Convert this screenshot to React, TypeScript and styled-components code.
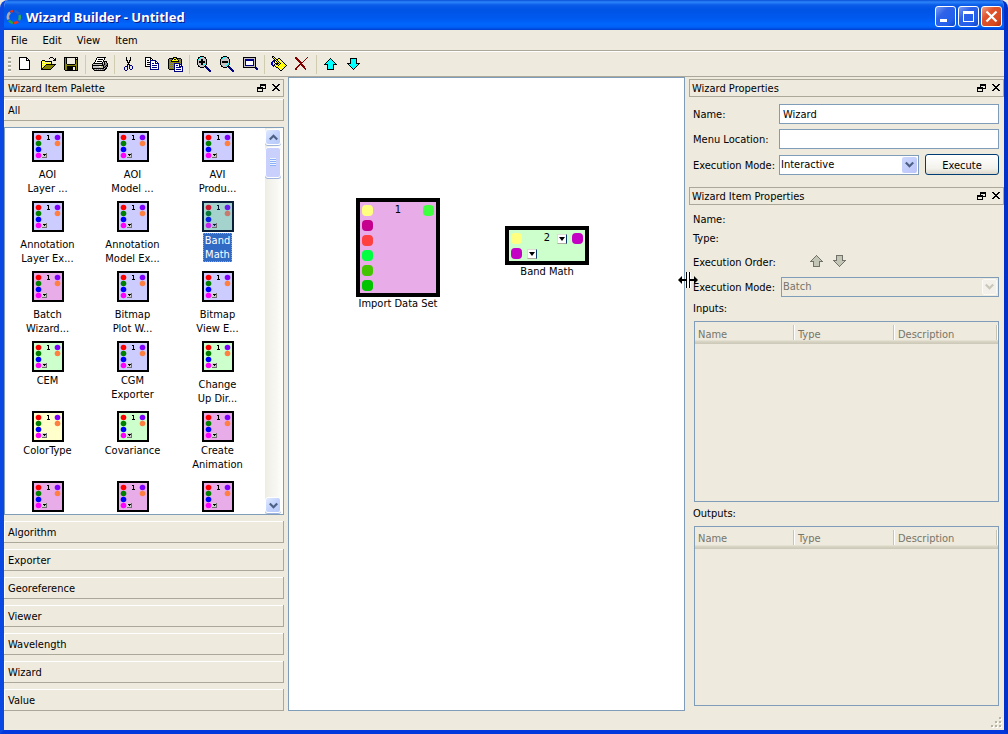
import React from 'react';
import styled, { createGlobalStyle } from 'styled-components';

const FACE = '#eeeade';
const SHADOW = '#aca899';
const FIELD_BORDER = '#7f9db9';

const GlobalStyle = createGlobalStyle`
  * { box-sizing: border-box; }
  body { margin: 0; background: ${FACE}; }
  body, button, input, select {
    font-family: 'DejaVu Sans Condensed', Tahoma, sans-serif;
    font-size: 11px;
    line-height: 14px;
    color: #000;
  }
  button { padding: 0; border: 0; background: none; text-align: left; }
`;

/* ---------- pixel icons ---------- */

const PALETTE: Record<string, string> = {
  K: '#000000',
  W: '#ffffff',
  N: '#000084',
  Y: '#ffff00',
  P: '#ffff9c',
  O: '#848200',
  G: '#848284',
  L: '#c6c3c6',
  E: '#eeeade',
  C: '#00ffff',
  R: '#840000',
  B: '#0000ff',
};

const ICONS: Record<string, string[]> = {
  new: [
    '',
    '...KKKKKKKK',
    '...KWWWWWWKK',
    '...KWWWWWWKWK',
    '...KWWWWWWKKKK',
    '...KWWWWWWWWWK',
    '...KWWWWWWWWWK',
    '...KWWWWWWWWWK',
    '...KWWWWWWWWWK',
    '...KWWWWWWWWWK',
    '...KWWWWWWWWWK',
    '...KWWWWWWWWWK',
    '...KWWWWWWWWWK',
    '...KKKKKKKKKKK',
  ],
  open: [
    '',
    '...........KKK',
    '..........K...K.K',
    '...............KK',
    '...KKK........KKK',
    '..KYPYKKKKKKK',
    '..KPYPYPYPYPK',
    '..KYPYPYPYPYK',
    '..KPYPYKKKKKKKKKK',
    '..KYPYKOOOOOOOOK',
    '..KPYKOOOOOOOOK',
    '..KYKOOOOOOOOK',
    '..KKOOOOOOOOK',
    '..KKKKKKKKKK',
  ],
  save: [
    '',
    '..KKKKKKKKKKKKKK',
    '..KOKEEEEEEEEKEK',
    '..KOKEEEEEEEEKKK',
    '..KOKEEEEEEEEKOK',
    '..KOKEEEEEEEEKOK',
    '..KOKEEEEEEEEKOK',
    '..KOKEEEEEEEEKOK',
    '..KOOKKKKKKKKOOK',
    '..KOOOOOOOOOOOOK',
    '..KOOKKKKKKKKKOK',
    '..KOOKKKKKKEEKOK',
    '..KOOKKKKKKEEKOK',
    '..KOOKKKKKKEEKOK',
    '...KKKKKKKKKKKKK',
  ],
  print: [
    '',
    '......KKKKKKKKK',
    '.....KWWWWWWWK',
    '.....KWKKKKKWK',
    '....KWWWWWWWK',
    '....KWKKKKKWKKKK',
    '...KWWWWWWWKLKLK',
    '..KKKKKKKKKKLKGGK',
    '.KLLLLLLLLLKGKGGK',
    '.KKKKKKKKKKKKGGKK',
    '.KLLLLLLPPLLKGKGK',
    '.KLLLLLLLLLLKKGK',
    '.KKKKKKKKKKKKLKK',
    '..KGLGLGLGLGGKK',
    '...KKKKKKKKKKK',
  ],
  cut: [
    '',
    '......K...K',
    '......K...K',
    '......K...K',
    '......KK.KK',
    '.......K.K',
    '.......KKK',
    '........K',
    '.......NKN',
    '.......N.NNN',
    '.....NNN.N..N',
    '....N..N.N..N',
    '....N..N.N..N',
    '....N..N..NN',
    '.....NN',
  ],
  copy: [
    '',
    '..KKKKKK',
    '..KWWWWKK',
    '..KWWWWKWK',
    '..KWKKWNNNNNN',
    '..KWWWWNWWWWNN',
    '..KWKKKNWWWWNWN',
    '..KWWWWNWNNWNNNN',
    '..KWKKKNWWWWWWWN',
    '..KWWWWNWNNNNNWN',
    '..KKKKKNWWWWWWWN',
    '.......NWNNNNNWN',
    '.......NWWWWWWWN',
    '.......NNNNNNNNN',
  ],
  paste: [
    '',
    '.......KKKK',
    '...KKKKKYYKKKKK',
    '..KOGOKYKKYKGOGK',
    '..KGOKYYYYYYKGOK',
    '..KOGKKKKKKKKOGK',
    '..KGOGOGOGOGOGOK',
    '..KOGOGONNNNNNGK',
    '..KGOGOGNWWWWNNK',
    '..KOGOGONWNNWNWN',
    '..KGOGOGNWWWWNNNN',
    '..KOGOGONWNNNNNWN',
    '..KGOGOGNWWWWWWWN',
    '...KKKKKNWNNNNNWN',
    '........NWWWWWWWN',
    '........NNNNNNNNN',
  ],
  zoomIn: [
    '.....KKKK',
    '...KKCLLLKK',
    '...KCLLLLLK',
    '..KCLLKKLLLK',
    '..KLLLKKLLLK',
    '..KLKKKKKKLK',
    '..KLKKKKKKLK',
    '..KLLLKKLLCK',
    '..KLLLKKLCLK',
    '...KLLLLCLK',
    '...KKLLLLKKN',
    '.....KKKK.NNN',
    '...........NNN',
    '............NNN',
    '.............NNN',
    '..............NN',
  ],
  zoomOut: [
    '.....KKKK',
    '...KKCCLLKK',
    '...KCLLLLLK',
    '..KCLLLLLLLK',
    '..KLLLLLLLLK',
    '..KLKKKKKKLK',
    '..KLKKKKKKLK',
    '..KLLLLLLLCK',
    '..KLLLLLLCCK',
    '...KLLLLCCK',
    '...KKLLLLKKN',
    '.....KKKK.NNN',
    '...........NNN',
    '............NNN',
    '.............NNN',
    '..............NN',
  ],
  zoomFit: [
    '',
    '..KKKKKKKKKKKKK',
    '..KLLLLLLLLLLLK',
    '..KLNNNNNNNNNLK',
    '..KLNNNNNNNNNLK',
    '..KLNWWWWWWWNLK',
    '..KLNWWWWWWWNLK',
    '..KLNWWWWWWWNLK',
    '..KLNWWWWWWWNLK',
    '..KLNNNNNNNNNLK',
    '..KLLLLLLLLLLLK',
    '..KKKKKKKKKKKKNN',
    '..............NNN',
    '...............NN',
  ],
  gear: [
    '..KK',
    '..KYK',
    '...KYK..KK',
    '....KYKKYPK',
    '...NNKYKPYYK',
    '..NBKYKYKYPYK',
    '.NB.KPYKYKYYPK',
    '.NB..KKKKYKYYYK',
    '.NB.KYKKYKYPYYYK',
    '..NNKYPYKYYYYPYYK',
    '...N.KYYYPYYYYYK',
    '......KKYYYYPYK',
    '........KYYYYK',
    '.........KPYK',
    '..........KK',
  ],
  remove: [
    '',
    '..RR..........R',
    '..RRR........R',
    '...RRR......R',
    '....RRR....R',
    '.....RRR..R',
    '......RRRR',
    '.......RR',
    '......RRRR',
    '.....RR.RRR',
    '....RR...RRR',
    '...RR.....RR',
    '..RR.......RR',
    '..RR........R',
  ],
  up: [
    '',
    '',
    '........K',
    '.......KCK',
    '......KCCCK',
    '.....KCCCCCK',
    '....KCCCCCCCK',
    '...KCCCCCCCCCK',
    '..KKKKCCCCCKKKK',
    '.....KCCCCCK',
    '.....KCCCCCK',
    '.....KCCCCCK',
    '.....KCCCCCK',
    '.....KKKKKKK',
  ],
  down: [
    '',
    '',
    '.....KKKKKKK',
    '.....KCCCCCK',
    '.....KCCCCCK',
    '.....KCCCCCK',
    '.....KCCCCCK',
    '..KKKKCCCCCKKKK',
    '...KCCCCCCCCCK',
    '....KCCCCCCCK',
    '.....KCCCCCK',
    '......KCCCK',
    '.......KCK',
    '........K',
  ],
  float: ['...KKKKKK', '...KKKKKK', '...K....K', 'KKKKKK..K', 'KKKKKKKKK', 'K....K', 'K....K', 'KKKKKK'],
  close: ['KK....KK', '.KK..KK', '..KKKK', '...KK', '..KKKK', '.KK..KK', 'KK....KK'],
};

const DISABLED: Record<string, string> = { K: '#73726a', C: '#c3c6b4' };

function PixelIcon({ name, size = 17, colors = PALETTE }: { name: string; size?: number; colors?: Record<string, string> }) {
  const runs: React.ReactNode[] = [];
  ICONS[name].forEach((row, y) => {
    let x = 0;
    while (x < row.length) {
      let end = x + 1;
      while (end < row.length && row[end] === row[x]) end += 1;
      if (row[x] !== '.') {
        runs.push(<rect key={`${x}-${y}`} x={x} y={y} width={end - x} height={1} fill={colors[row[x]]} />);
      }
      x = end;
    }
  });
  return (
    <svg width={size} height={size} viewBox={`0 0 ${size} ${size}`} shapeRendering="crispEdges" aria-hidden="true">
      {runs}
    </svg>
  );
}

/* ---------- window frame ---------- */

const Window = styled.div`
  display: flex;
  flex-direction: column;
  min-height: 100vh;
  border: solid;
  border-width: 0 4px 4px;
  border-color: #0238dc #0331c8 #0238dc #0a48e4;
  border-radius: 8px 8px 0 0;
  background: ${FACE};
  overflow: hidden;
`;

const TitleBar = styled.header`
  display: flex;
  align-items: center;
  height: 30px;
  margin: 0 -4px;
  padding: 3px 6px 0 6px;
  background: linear-gradient(#0a4ed8 0, #2c86fa 2px, #0a5ce8 5px, #0054e4 9px, #0058ee 18px, #0066fc 24px, #0062f8 27px, #003dd0 30px);
`;

const Title = styled.h1`
  flex: 1;
  margin: 0 0 0 4px;
  padding-top: 1px;
  font-family: 'Noto Sans', 'Trebuchet MS', sans-serif;
  font-size: 13px;
  line-height: 18px;
  font-weight: bold;
  color: #fff;
  text-shadow: 1px 1px 0 #0a1883;
`;

const CaptionButtons = styled.div`
  display: flex;
  gap: 2px;
`;

const CaptionButton = styled.button<{ $danger?: boolean }>`
  display: grid;
  place-items: center;
  width: 21px;
  height: 21px;
  border: 1px solid #fff;
  border-radius: 3px;
  background: ${p =>
    p.$danger
      ? 'linear-gradient(135deg, #f0a088, #e0532c 35%, #d84a20 75%, #b83010)'
      : 'linear-gradient(135deg, #7a9cf4, #2e62e8 35%, #2260ec 75%, #1044c0)'};
`;

const AppLogo = () => (
  <svg width="16" height="16" viewBox="0 0 16 16" fill="none" strokeWidth="2.6" aria-hidden="true">
    <path d="M2.5 10.5A6 6 0 0 1 4 3.5" stroke="#b0a8a8" />
    <path d="M4.5 3A6 6 0 0 1 7 2" stroke="#e03020" />
    <path d="M8.5 2A6 6 0 0 1 13 5" stroke="#2060c8" />
    <path d="M13.5 6A6 6 0 0 1 13 11" stroke="#30a850" />
    <path d="M12 12.5A6 6 0 0 1 8 14" stroke="#e83020" />
    <path d="M7 14A6 6 0 0 1 3 11.5" stroke="#28a040" />
  </svg>
);

const MenuBar = styled.nav`
  display: flex;
  height: 22px;
  padding: 0 1px;
  border-bottom: 1px solid #fff;
  box-shadow: inset 0 -1px 0 ${SHADOW};
`;

const MenuItem = styled.button`
  height: 20px;
  padding: 2px 8px 0 6px;
  margin-right: 1px;
`;

const ToolBar = styled.div`
  display: flex;
  height: 25px;
  padding-left: 4px;
  border-bottom: 1px solid ${SHADOW};
`;

const Grip = styled.div`
  width: 3px;
  height: 15px;
  margin: 5px 2px 0 0;
  background: repeating-linear-gradient(${SHADOW} 0 2px, #fff 2px 3px, ${FACE} 3px 4px);
`;

const ToolButton = styled.button`
  display: block;
  width: 23px;
  height: 24px;
  padding: 4px 3px;
  svg { display: block; }
`;

const ToolDivider = styled.div`
  width: 1px;
  height: 19px;
  margin: 3px 2px 0 3px;
  background: #d0ccb0;
`;

/* ---------- dock panels ---------- */

const Workspace = styled.main`
  flex: 1;
  display: flex;
  min-height: 0;
`;

const PaletteDock = styled.section`
  display: flex;
  flex-direction: column;
  width: 280px;
  padding-top: 2px;
`;

const PropertiesDock = styled.section`
  display: flex;
  flex-direction: column;
  width: 315px;
  padding: 2px 0 5px;
`;

const DockTitle = styled.header`
  display: flex;
  align-items: center;
  height: 18px;
  padding: 0 2px;
  border: 1px solid ${SHADOW};
`;

const LeftDockTitle = styled(DockTitle)`
  padding-left: 4px;
  border-left: 0;
`;

const ItemDockTitle = styled(DockTitle)`
  margin-top: 12px;
`;

const DockName = styled.h2`
  flex: 1;
  margin: 0;
  padding-top: 2px;
  font-size: 11px;
  line-height: 14px;
  font-weight: normal;
`;

const DockButton = styled.button`
  width: 9px;
  height: 9px;
  margin-left: 6px;
  svg { display: block; }
`;

const Tab = styled.button`
  flex: none;
  height: 22px;
  margin-top: 6px;
  padding: 2px 0 0 4px;
  border: 1px solid ${SHADOW};
  border-width: 0 1px 1px 0;
  box-shadow: inset 1px 1px 0 #fff;
`;

const FirstTab = styled(Tab)`
  margin-top: 2px;
`;

const ItemList = styled.div`
  flex: 1 1 0;
  display: flex;
  min-height: 200px;
  margin-top: 6px;
  border: 1px solid ${FIELD_BORDER};
  background: #fff;
  overflow: hidden;
`;

const Items = styled.ul`
  flex: 1;
  display: grid;
  grid-template-columns: repeat(3, 85px);
  grid-auto-rows: 70px;
  align-content: start;
  height: 0;
  margin: 0;
  padding: 3px 0 0;
  list-style: none;
`;

const Item = styled.li`
  display: flex;
  flex-direction: column;
  align-items: center;
  svg { display: block; flex: none; }
`;

const ItemLabel = styled.span<{ $low?: boolean; $selected?: boolean }>`
  margin-top: ${p => (p.$low ? 5 : 1)}px;
  padding: 1px 2px 0;
  text-align: center;
  white-space: pre-line;
  background: ${p => (p.$selected ? '#316ac5' : 'transparent')};
  color: ${p => (p.$selected ? '#fff' : '#000')};
  outline: ${p => (p.$selected ? '1px dotted #d8963c' : 'none')};
  outline-offset: -1px;
`;

const ScrollBar = styled.div`
  display: flex;
  flex-direction: column;
  justify-content: space-between;
  width: 18px;
  padding: 1px 2px 1px 0;
  background: linear-gradient(90deg, #eeede5, #fefefb);
`;

const ScrollButton = styled.button`
  display: grid;
  place-items: center;
  width: 16px;
  height: 16px;
  border: 1px solid #fff;
  border-radius: 3px;
  background: linear-gradient(135deg, #e1eafe, #c3d3fd 50%, #b9c9f8);
  box-shadow: 0 1px 0 #9fb5e0;
`;

const ScrollThumb = styled.div`
  height: 31px;
  margin-top: 2px;
  padding: 10px 4px;
  border: 1px solid #fff;
  border-radius: 3px;
  background: #c9d0fc;
  box-shadow: 0 1px 0 #9fb5e0;
`;

const ThumbGrip = styled.div`
  height: 8px;
  background: repeating-linear-gradient(#eef4fe 0 1px, #8cb0f8 1px 2px);
`;

const Chevron = ({ up = false, color = '#4d6185' }: { up?: boolean; color?: string }) => (
  <svg width="9" height="7" viewBox="0 0 9 7" fill="none" stroke={color} strokeWidth="2.2" aria-hidden="true">
    <path d={up ? 'M.8 5.5 4.5 1.8 8.2 5.5' : 'M.8 1.5 4.5 5.2 8.2 1.5'} />
  </svg>
);

const PORT_COLORS = { red: '#ff0000', green: '#008000', blue: '#0000ff', magenta: '#ff00ff', violet: '#8000ff', orange: '#ff8040' };
const SELECTED_COLORS = { red: '#cc1a31', green: '#0a7a3c', blue: '#0a24e0', magenta: '#c824ee', violet: '#6a1eee', orange: '#c87a6c' };

const ItemIcon = ({ fill, selected }: { fill: string; selected?: boolean }) => {
  const c = selected ? SELECTED_COLORS : PORT_COLORS;
  const ink = selected ? '#0a1e38' : '#000';
  return (
    <svg width="32" height="31" viewBox="0 0 32 31" aria-hidden="true">
      <rect x="1" y="1" width="30" height="29" fill={fill} stroke={ink} strokeWidth="2" />
      <circle cx="6.5" cy="6.5" r="2.8" fill={c.red} />
      <circle cx="6.5" cy="12.5" r="2.8" fill={c.green} />
      <circle cx="6.5" cy="18.5" r="2.8" fill={c.blue} />
      <circle cx="6.5" cy="24.5" r="2.8" fill={c.magenta} />
      <circle cx="25.5" cy="6.5" r="2.8" fill={c.violet} />
      <circle cx="25.5" cy="12.5" r="2.8" fill={c.orange} />
      <g shapeRendering="crispEdges">
        <path d="M15 4h2v4h1v1h-3v-1h1v-3h-1z" fill={ink} />
        <path d="M10 22h5v5h-5z" fill={selected ? '#a8b8d8' : '#d0d0d0'} />
        <path d="M14 22h1v5h-5v-1h4z" fill="#707070" />
        <path d="M11 23h3v1h-1v1h-1v-1h-1z" fill={ink} />
      </g>
    </svg>
  );
};

/* ---------- canvas ---------- */

const Canvas = styled.section`
  position: relative;
  flex: 1;
  min-width: 0;
  margin: 0 0 0 4px;
  border: 1px solid ${FIELD_BORDER};
  background: #fff;
`;

const Node = styled.figure<{ $x: number; $y: number }>`
  position: absolute;
  left: ${p => p.$x}px;
  top: ${p => p.$y}px;
  display: flex;
  flex-direction: column;
  align-items: center;
  width: 84px;
  margin: 0;
`;

const NodeBody = styled.div<{ $fill: string }>`
  display: flex;
  justify-content: space-between;
  width: 84px;
  padding: 1px 2px 0;
  border: 4px solid #000;
  background: ${p => p.$fill};
`;

const Ports = styled.div`
  display: flex;
  flex-direction: column;
`;

const PortRow = styled.div`
  display: flex;
  align-items: center;
  gap: 5px;
  height: 15px;
`;

const PortDot = styled.span<{ $color: string }>`
  width: 11px;
  height: 11px;
  border-radius: 4px;
  background: ${p => p.$color};
`;

const PortMenu = styled.button`
  display: grid;
  place-items: center;
  width: 10px;
  height: 10px;
  border: 1px solid #e0ddd4;
  border-right-color: #0c3c6c;
  border-bottom-color: #b0aca0;
  background: #fff;
`;

const NodeNumber = styled.span`
  line-height: 14px;
`;

const NodeCaption = styled.figcaption`
  white-space: nowrap;
`;

const PortArrow = () => (
  <svg width="6" height="4" viewBox="0 0 6 4" aria-hidden="true">
    <path d="M0 0h6L3 4z" />
  </svg>
);

const Splitter = styled.div`
  position: relative;
  width: 4px;
`;

const ResizeCursor = styled.svg`
  position: absolute;
  left: -7px;
  top: 195px;
  z-index: 1;
`;

/* ---------- forms ---------- */

const Form = styled.form`
  display: grid;
  grid-template-columns: 86px 1fr;
  row-gap: 5px;
  align-items: center;
  padding: 7px 5px 0 4px;
`;

const ItemForm = styled.div`
  display: grid;
  grid-template-columns: 88px 1fr;
  row-gap: 1px;
  align-items: center;
  padding: 5px 5px 0 4px;
`;

const Label = styled.label`
  padding-top: 2px;
  white-space: nowrap;
`;

const StaticRow = styled.span`
  grid-column: 1 / -1;
  height: 18px;
  padding-top: 3px;
`;

const TextBox = styled.input`
  width: 100%;
  height: 20px;
  padding: 1px 3px 0;
  border: 1px solid ${FIELD_BORDER};
  border-radius: 0;
  background: #fff;
  outline: none;
`;

const ModeRow = styled.div`
  display: flex;
  align-items: center;
  gap: 6px;
  height: 21px;
`;

const SelectFrame = styled.div`
  flex: 1;
  display: grid;
  align-items: center;
  justify-items: end;
  height: 21px;
`;

const Select = styled.select`
  grid-area: 1 / 1;
  width: 100%;
  height: 20px;
  padding: 1px 2px 0 1px;
  appearance: none;
  border: 1px solid ${FIELD_BORDER};
  border-radius: 0;
  background: #fff;
  &:disabled { background: ${FACE}; color: #76756a; opacity: 1; }
`;

const SelectArrow = styled.span<{ $disabled?: boolean }>`
  grid-area: 1 / 1;
  display: grid;
  place-items: center;
  width: 15px;
  height: 16px;
  margin-right: 2px;
  border-radius: 2px;
  pointer-events: none;
  background: ${p => (p.$disabled ? '#f2f0e8' : 'linear-gradient(135deg, #ccd8fe, #bcc4f8)')};
  border: ${p => (p.$disabled ? '1px solid #fbfaf6' : '0')};
`;

const ExecuteButton = styled.button`
  width: 74px;
  height: 21px;
  padding-top: 2px;
  border: 1px solid #003c74;
  border-radius: 3px;
  background: linear-gradient(#fff, #f3f2ec 70%, #dcd7cb);
  text-align: center;
`;

const OrderButtons = styled.div`
  display: flex;
  align-items: center;
  height: 27px;
  padding-left: 27px;
`;

const OrderButton = styled.button`
  width: 23px;
  height: 17px;
  svg { display: block; }
`;

const TableLabel = styled.h3`
  height: 24px;
  margin: 0 4px;
  padding-top: 5px;
  font-size: 11px;
  line-height: 14px;
  font-weight: normal;
`;

const TableFrame = styled.div`
  flex: 1 1 0;
  min-height: 80px;
  margin: 0 5px;
  border: 1px solid ${FIELD_BORDER};
`;

const Table = styled.table`
  width: 100%;
  border-collapse: collapse;
  table-layout: fixed;
`;

const HeadRow = styled.tr`
  background: linear-gradient(${FACE} 18px, #dcd8c6 19px, #cbc7b8);
`;

const HeadCell = styled.th`
  height: 22px;
  padding: 3px 0 0 3px;
  font-weight: normal;
  text-align: left;
  color: #76756a;
  background: linear-gradient(#c8c5b2, #c8c5b2) right 1px top 3px / 1px 15px no-repeat,
    linear-gradient(#fff, #fff) right 0 top 3px / 1px 15px no-repeat;
`;

const FixedColumn = styled.col`
  width: 100px;
`;

const StatusBar = styled.footer`
  display: flex;
  justify-content: flex-end;
  align-items: flex-end;
  height: 19px;
  padding: 0 1px 1px;
`;

const SizeGrip = () => (
  <svg width="12" height="12" viewBox="0 0 12 12" shapeRendering="crispEdges" aria-hidden="true">
    {[[9, 1], [9, 5], [5, 5], [9, 9], [5, 9], [1, 9]].map(([x, y]) => (
      <g key={`${x}-${y}`}>
        <rect x={x} y={y} width="2" height="2" fill="#fff" />
        <rect x={x - 1} y={y - 1} width="2" height="2" fill="#b8b4a2" />
      </g>
    ))}
  </svg>
);

/* ---------- data ---------- */

const LILAC = '#ccccff';
const MINT = '#ccffcc';
const PINK = '#e8ade8';
const CREAM = '#ffffcc';

const TOOLS = [['new', 'open', 'save'], ['print'], ['cut', 'copy', 'paste'], ['zoomIn', 'zoomOut', 'zoomFit'], ['gear', 'remove'], ['up', 'down']];

const ITEMS: { label: string; fill: string; low?: boolean; selected?: boolean }[] = [
  { label: 'AOI\nLayer ...', fill: LILAC, low: true },
  { label: 'AOI\nModel ...', fill: LILAC, low: true },
  { label: 'AVI\nProdu...', fill: LILAC, low: true },
  { label: 'Annotation\nLayer Ex...', fill: LILAC, low: true },
  { label: 'Annotation\nModel Ex...', fill: LILAC, low: true },
  { label: 'Band\nMath', fill: '#a4d2cc', selected: true },
  { label: 'Batch\nWizard...', fill: PINK, low: true },
  { label: 'Bitmap\nPlot W...', fill: LILAC, low: true },
  { label: 'Bitmap\nView E...', fill: LILAC, low: true },
  { label: 'CEM', fill: MINT },
  { label: 'CGM\nExporter', fill: LILAC },
  { label: 'Change\nUp Dir...', fill: MINT, low: true },
  { label: 'ColorType', fill: CREAM },
  { label: 'Covariance', fill: MINT },
  { label: 'Create\nAnimation', fill: PINK },
  { label: '', fill: PINK },
  { label: '', fill: PINK },
  { label: '', fill: PINK },
];

const CATEGORIES = ['Algorithm', 'Exporter', 'Georeference', 'Viewer', 'Wavelength', 'Wizard', 'Value'];

const DockControls = () => (
  <>
    <DockButton aria-label="Float"><PixelIcon name="float" size={9} /></DockButton>
    <DockButton aria-label="Close"><PixelIcon name="close" size={9} /></DockButton>
  </>
);

const PortTable = ({ label }: { label: string }) => (
  <>
    <TableLabel>{label}</TableLabel>
    <TableFrame>
      <Table>
        <colgroup>
          <FixedColumn />
          <FixedColumn />
          <col />
        </colgroup>
        <thead>
          <HeadRow>
            <HeadCell>Name</HeadCell>
            <HeadCell>Type</HeadCell>
            <HeadCell>Description</HeadCell>
          </HeadRow>
        </thead>
        <tbody />
      </Table>
    </TableFrame>
  </>
);

export default function App() {
  return (
    <>
      <GlobalStyle />
      <Window>
        <TitleBar>
          <AppLogo />
          <Title>Wizard Builder - Untitled</Title>
          <CaptionButtons>
            <CaptionButton aria-label="Minimize">
              <svg width="13" height="13" viewBox="0 0 13 13"><path d="M1 9h7v3H1z" fill="#fff" /></svg>
            </CaptionButton>
            <CaptionButton aria-label="Maximize">
              <svg width="13" height="13" viewBox="0 0 13 13"><path d="M1 1h11v11H1zM2 4v7h9V4z" fill="#fff" fillRule="evenodd" /></svg>
            </CaptionButton>
            <CaptionButton aria-label="Close window" $danger>
              <svg width="13" height="13" viewBox="0 0 13 13"><path d="M1.5 1.5l10 10M11.5 1.5l-10 10" stroke="#fff" strokeWidth="2.2" /></svg>
            </CaptionButton>
          </CaptionButtons>
        </TitleBar>

        <MenuBar>
          {['File', 'Edit', 'View', 'Item'].map(name => <MenuItem key={name}>{name}</MenuItem>)}
        </MenuBar>

        <ToolBar role="toolbar">
          <Grip />
          {TOOLS.map((group, i) => (
            <React.Fragment key={group[0]}>
              {i > 0 && <ToolDivider />}
              {group.map(name => (
                <ToolButton key={name} aria-label={name}><PixelIcon name={name} /></ToolButton>
              ))}
            </React.Fragment>
          ))}
        </ToolBar>

        <Workspace>
          <PaletteDock>
            <LeftDockTitle>
              <DockName>Wizard Item Palette</DockName>
              <DockControls />
            </LeftDockTitle>
            <FirstTab>All</FirstTab>
            <ItemList>
              <Items>
                {ITEMS.map((item, i) => (
                  <Item key={i}>
                    <ItemIcon fill={item.fill} selected={item.selected} />
                    {item.label && <ItemLabel $low={item.low} $selected={item.selected}>{item.label}</ItemLabel>}
                  </Item>
                ))}
              </Items>
              <ScrollBar>
                <div>
                  <ScrollButton aria-label="Scroll up"><Chevron up /></ScrollButton>
                  <ScrollThumb><ThumbGrip /></ScrollThumb>
                </div>
                <ScrollButton aria-label="Scroll down"><Chevron /></ScrollButton>
              </ScrollBar>
            </ItemList>
            {CATEGORIES.map(name => <Tab key={name}>{name}</Tab>)}
          </PaletteDock>

          <Canvas>
            <Node $x={67} $y={120}>
              <NodeBody $fill={PINK}>
                <Ports>
                  {['#ffff80', '#c4008c', '#ff4040', '#00ff40', '#44c400', '#00c400'].map(color => (
                    <PortRow key={color}><PortDot $color={color} /></PortRow>
                  ))}
                </Ports>
                <NodeNumber>1</NodeNumber>
                <Ports>
                  <PortRow><PortDot $color="#40ff40" /></PortRow>
                </Ports>
              </NodeBody>
              <NodeCaption>Import Data Set</NodeCaption>
            </Node>
            <Node $x={216} $y={148}>
              <NodeBody $fill={MINT}>
                <Ports>
                  <PortRow><PortDot $color="#ffff80" /></PortRow>
                  <PortRow>
                    <PortDot $color="#c400c4" />
                    <PortMenu aria-label="Input options"><PortArrow /></PortMenu>
                  </PortRow>
                </Ports>
                <NodeNumber>2</NodeNumber>
                <Ports>
                  <PortRow>
                    <PortMenu aria-label="Output options"><PortArrow /></PortMenu>
                    <PortDot $color="#c400c4" />
                  </PortRow>
                </Ports>
              </NodeBody>
              <NodeCaption>Band Math</NodeCaption>
            </Node>
          </Canvas>

          <Splitter>
            <ResizeCursor width="20" height="16" viewBox="0 0 20 16" aria-hidden="true">
              <path d="M7 0h6v16H7z" fill="#fff" />
              <path d="M8 0h1v16H8zM11 0h1v16h-1zM0 8l4-4v3h4v2H4v3zM20 8l-4-4v3h-4v2h4v3z" />
            </ResizeCursor>
          </Splitter>

          <PropertiesDock>
            <DockTitle>
              <DockName>Wizard Properties</DockName>
              <DockControls />
            </DockTitle>
            <Form onSubmit={e => e.preventDefault()}>
              <Label htmlFor="wizard-name">Name:</Label>
              <TextBox id="wizard-name" defaultValue="Wizard" />
              <Label htmlFor="menu-location">Menu Location:</Label>
              <TextBox id="menu-location" />
              <Label htmlFor="wizard-mode">Execution Mode:</Label>
              <ModeRow>
                <SelectFrame>
                  <Select id="wizard-mode" defaultValue="Interactive">
                    <option>Interactive</option>
                    <option>Batch</option>
                  </Select>
                  <SelectArrow><Chevron /></SelectArrow>
                </SelectFrame>
                <ExecuteButton type="submit">Execute</ExecuteButton>
              </ModeRow>
            </Form>
            <ItemDockTitle>
              <DockName>Wizard Item Properties</DockName>
              <DockControls />
            </ItemDockTitle>
            <ItemForm>
              <StaticRow>Name:</StaticRow>
              <StaticRow>Type:</StaticRow>
              <Label as="span">Execution Order:</Label>
              <OrderButtons>
                <OrderButton aria-label="Move up" disabled><PixelIcon name="up" colors={DISABLED} /></OrderButton>
                <OrderButton aria-label="Move down" disabled><PixelIcon name="down" colors={DISABLED} /></OrderButton>
              </OrderButtons>
              <Label htmlFor="item-mode">Execution Mode:</Label>
              <SelectFrame>
                <Select id="item-mode" disabled defaultValue="Batch">
                  <option>Batch</option>
                </Select>
                <SelectArrow $disabled><Chevron color="#c9c7ba" /></SelectArrow>
              </SelectFrame>
            </ItemForm>
            <PortTable label="Inputs:" />
            <PortTable label="Outputs:" />
          </PropertiesDock>
        </Workspace>

        <StatusBar><SizeGrip /></StatusBar>
      </Window>
    </>
  );
}
